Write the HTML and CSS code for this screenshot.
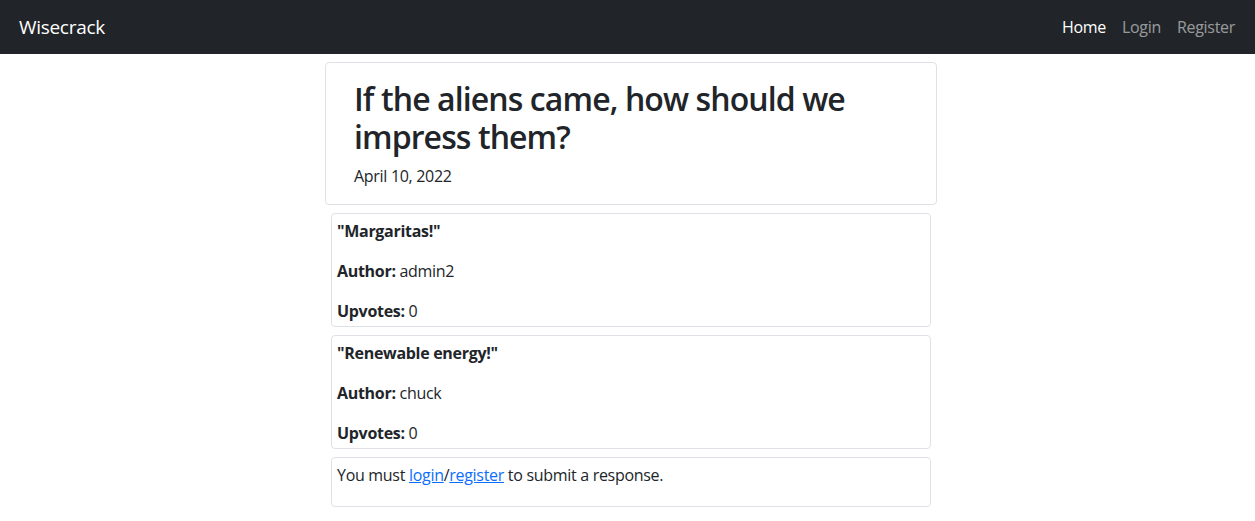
FILE: index.html
```html
<!DOCTYPE html>
<html lang="en">
<head>
<meta charset="utf-8">
<title>Wisecrack</title>
<link rel="stylesheet" href="styles.css">
</head>
<body>
<nav class="navbar">
  <a class="brand" href="#">Wisecrack</a>
  <ul class="nav">
    <li><a class="nav-link active" href="#">Home</a></li>
    <li><a class="nav-link" href="#">Login</a></li>
    <li><a class="nav-link" href="#">Register</a></li>
  </ul>
</nav>
<main class="container">
  <section class="prompt-card">
    <h2 class="prompt-title">If the aliens came, how should we impress them?</h2>
    <p class="prompt-date">April 10, 2022</p>
  </section>
  <div class="responses">
    <div class="response-card">
      <p><strong>"Margaritas!"</strong></p>
      <p><strong>Author:</strong> admin2</p>
      <p><strong>Upvotes:</strong> 0</p>
    </div>
    <div class="response-card">
      <p><strong>"Renewable energy!"</strong></p>
      <p><strong>Author:</strong> chuck</p>
      <p><strong>Upvotes:</strong> 0</p>
    </div>
    <div class="response-card notice">
      <p>You must <a href="#">login</a>/<a href="#">register</a> to submit a response.</p>
    </div>
  </div>
</main>
</body>
</html>
```
FILE: styles.css
```css
* { box-sizing: border-box; }
body {
  margin: 0;
  font-family: "Open Sans", "Noto Sans", sans-serif;
  font-size: 16px;
  line-height: 1.5;
  letter-spacing: -0.3px;
  color: #212529;
  background: #fff;
}
.navbar {
  background: #212529;
  height: 54px;
  display: flex;
  align-items: center;
  justify-content: space-between;
  padding: 0 20px 0 19px;
}
.brand {
  color: #fff;
  font-size: 19px;
  text-decoration: none;
}
.nav {
  list-style: none;
  margin: 0;
  padding: 0;
  display: flex;
  gap: 16px;
}
.nav-link {
  color: rgba(255,255,255,.55);
  text-decoration: none;
  font-size: 16px;
}
.nav-link.active { color: #fff; }
.container {
  width: 619px;
  margin: 8px auto 0;
  padding-left: 7px;
}
.prompt-card {
  border: 1px solid #dee2e6;
  border-radius: 4px;
  padding: 17px 28px 16px;
}
.prompt-title {
  font-size: 32px;
  font-weight: 600;
  line-height: 1.2;
  letter-spacing: -0.9px;
  margin: 0 0 7px;
}
.prompt-date {
  margin: 0;
}
.responses {
  display: flex;
  flex-direction: column;
  gap: 8px;
  padding: 8px 6px 0;
}
.response-card {
  border: 1px solid #dee2e6;
  border-radius: 4px;
  padding: 5px 5px 3px;
}
.response-card p {
  margin: 0 0 16px;
}
.response-card p:last-child { margin-bottom: 0; }
.response-card.notice { padding-bottom: 19px; }
strong { font-weight: 700; }
a { color: #0d6efd; }
```
